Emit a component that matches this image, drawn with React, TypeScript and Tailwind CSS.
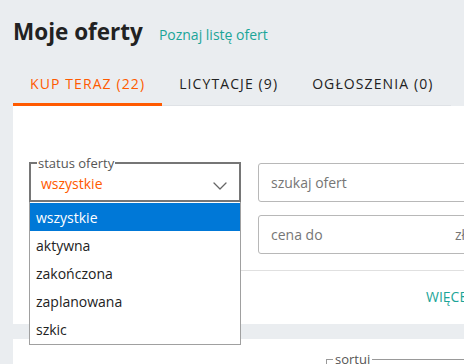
import { ChevronDown } from 'lucide-react';

const tabs = [
  { label: 'Kup teraz (22)', active: true },
  { label: 'Licytacje (9)', active: false },
  { label: 'Ogłoszenia (0)', active: false },
];

const statuses = ['wszystkie', 'aktywna', 'zakończona', 'zaplanowana', 'szkic'];

export default function App() {
  return (
    <div className="h-[364px] w-[464px] overflow-hidden bg-[#eaedf0] font-['Open_Sans',sans-serif] text-[#222]">
      <div className="flex items-baseline gap-4 pl-[13px] pt-[16px]">
        <h1 className="text-[22.5px] font-bold leading-[32px] text-[#222]">Moje oferty</h1>
        <a className="text-[14px] text-[#1ba598]">Poznaj listę ofert</a>
      </div>

      <div className="ml-[13px] flex w-[438px] border-b border-[#dfe2e6]">
        {tabs.map((tab) => (
          <div
            key={tab.label}
            className={
              tab.active
                ? 'mb-[-1px] border-b-[3px] border-[#ff5a00] px-[17px] pb-[9px] pt-[26px] text-[14px] uppercase leading-[20px] tracking-[1.1px] text-[#ff5a00]'
                : 'mb-[-1px] border-b-[3px] border-transparent px-[17px] pb-[9px] pt-[26px] text-[14px] uppercase leading-[20px] tracking-[1.1px] text-[#222]'
            }
          >
            {tab.label}
          </div>
        ))}
      </div>

      <div className="ml-[13px] w-[600px] bg-white px-4 pt-[49px]">
        <div className="flex items-end gap-[17px]">
          <div className="relative w-[212px]">
            <fieldset className="border-2 border-[#767676] px-[10px]">
              <legend className="ml-[-4px] px-[1px] text-[13px] leading-[16px] text-[#555]">status oferty</legend>
              <div className="flex h-[29px] items-start justify-between pt-[3px]">
                <span className="text-[14px] leading-[20px] text-[#ff5a00]">wszystkie</span>
                <ChevronDown className="mr-[-3px] h-[24px] w-[24px] text-[#666]" strokeWidth={1.3} />
              </div>
            </fieldset>
            <ul className="absolute left-0 top-full z-10 w-[212px] border border-t-0 border-[#a0a0a0] bg-white pb-[1px] pt-[1px]">
              {statuses.map((s, i) => (
                <li
                  key={s}
                  className={
                    i === 0
                      ? 'flex h-[28px] items-center bg-[#0078d7] pl-[6px] text-[14px] text-white'
                      : 'flex h-[28px] items-center pl-[6px] text-[14px] text-[#222]'
                  }
                >
                  {s}
                </li>
              ))}
            </ul>
          </div>
          <div className="flex h-[39px] w-[220px] items-center rounded-[3px] border border-[#b8b8b8] px-[12px] text-[14px] text-[#767676]">
            szukaj ofert
          </div>
        </div>

        <div className="mt-[13px] flex gap-[17px]">
          <div className="w-[212px]" />
          <div className="flex h-[39px] w-[220px] items-center justify-between rounded-[3px] border border-[#b8b8b8] px-[12px] text-[14px] text-[#767676]">
            <span>cena do</span>
            <span>zł</span>
          </div>
        </div>

        <div className="mt-[16px] h-px bg-[#e0e0e0]" />

        <div className="pb-[17px] pl-[397px] pt-[16px] text-[14px] uppercase leading-[20px] text-[#1ba598] whitespace-nowrap">
          Więcej filtrów
        </div>
      </div>

      <div className="ml-[13px] mt-[15px] h-[40px] w-[600px] bg-white pl-[313px] pt-[12px]">
        <fieldset className="h-[40px] border-l border-t border-[#999]">
          <legend className="ml-[6px] px-[2px] text-[13px] leading-[16px] text-[#555]">sortuj</legend>
        </fieldset>
      </div>
    </div>
  );
}
